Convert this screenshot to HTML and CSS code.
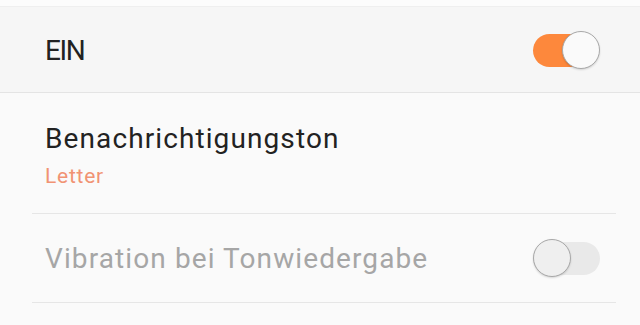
FILE: index.html
```html
<!DOCTYPE html>
<html lang="de">
<head>
<meta charset="utf-8">
<link rel="stylesheet" href="styles.css">
</head>
<body>
<div class="topstrip"></div>
<header class="master">
  <span class="master-label">EIN</span>
  <span class="switch on"><span class="track"></span><span class="thumb"></span></span>
</header>
<section class="list">
  <div class="item item-tone">
    <div class="title">Benachrichtigungston</div>
    <div class="subtitle">Letter</div>
  </div>
  <div class="divider"></div>
  <div class="item item-vib">
    <div class="title disabled">Vibration bei Tonwiedergabe</div>
    <span class="switch off"><span class="track"></span><span class="thumb"></span></span>
  </div>
  <div class="divider"></div>
</section>
</body>
</html>
```
FILE: styles.css
```css
html, body {
  margin: 0;
  padding: 0;
}
body {
  width: 640px;
  height: 325px;
  overflow: hidden;
  background: #fafafa;
  font-family: Roboto, "Noto Sans", "Liberation Sans", sans-serif;
}
.topstrip {
  height: 6px;
  background: #fcfcfc;
  border-bottom: 1px solid #efefef;
}
.master {
  height: 85px;
  background: #f6f6f6;
  border-bottom: 1px solid #e4e4e4;
  display: flex;
  align-items: center;
  justify-content: space-between;
  padding: 0 40px 0 45px;
}
.master-label {
  font-size: 28px;
  line-height: 34px;
  letter-spacing: -1.4px;
  color: #222;
  padding-top: 2px;
}
.switch {
  position: relative;
  width: 67px;
  height: 38px;
  display: inline-block;
}
.switch .track {
  position: absolute;
  left: 0;
  right: 0;
  top: 3px;
  height: 33px;
  border-radius: 17px;
}
.switch .thumb {
  position: absolute;
  top: 0;
  width: 36px;
  height: 36px;
  border-radius: 50%;
  box-sizing: content-box;
}
.switch.on .track {
  background: #fd883c;
  right: 3px;
}
.switch.on .thumb {
  right: 0;
  background: #fafafa;
  border: 1px solid #a9a9a9;
  box-shadow: 0 1px 2px rgba(0,0,0,0.15);
}
.switch.off .track {
  background: #e9e9e9;
}
.switch.off .thumb {
  left: 0;
  background: #efefef;
  border: 1.5px solid #a8a8a8;
  box-shadow: 0 1px 2px rgba(0,0,0,0.15);
}
.item {
  padding-left: 45px;
  padding-right: 40px;
}
.item-tone {
  padding-top: 29px;
  height: 91px;
}
.title {
  font-size: 28px;
  line-height: 34px;
  letter-spacing: 1.1px;
  color: #222;
}
.subtitle {
  margin-top: 6px;
  font-size: 21px;
  line-height: 28px;
  letter-spacing: 0.75px;
  color: #f19373;
}
.divider {
  height: 1px;
  background: #e6e6e6;
  margin: 0 24px 0 32px;
}
.item-vib {
  height: 88px;
  display: flex;
  align-items: center;
  justify-content: space-between;
}
.title.disabled {
  color: #a6a6a6;
  padding-top: 2px;
}
```
